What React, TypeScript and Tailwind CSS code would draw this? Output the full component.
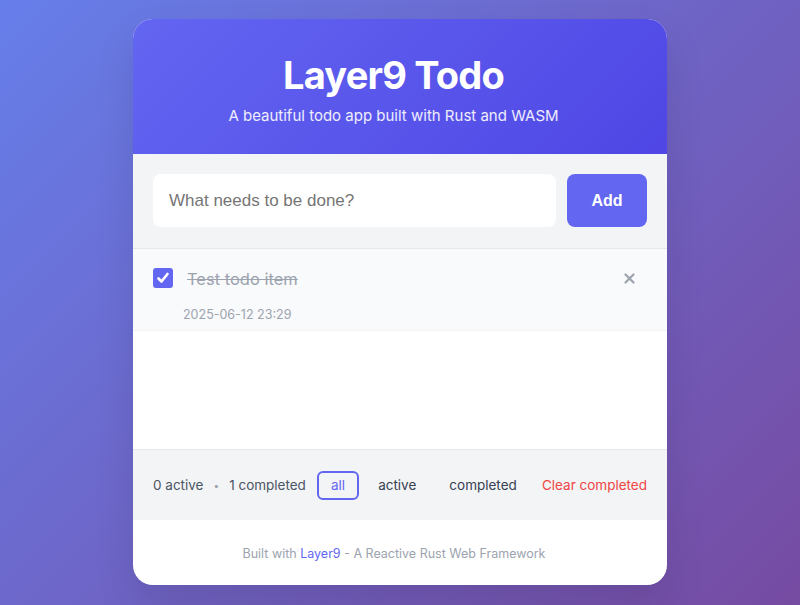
import { useState } from 'react';

type Filter = 'all' | 'active' | 'completed';

export default function App() {
  const [filter, setFilter] = useState<Filter>('all');
  const [done, setDone] = useState(true);

  return (
    <div className="min-h-screen w-full flex items-start justify-center pt-[19px] bg-[linear-gradient(135deg,#667eea_0%,#764ba2_100%)] font-['Inter',sans-serif]">
      <div className="w-[534px] rounded-[20px] overflow-hidden bg-white shadow-[0_20px_40px_rgba(0,0,0,0.1)]">
        {/* header */}
        <div className="h-[135px] flex flex-col items-center pr-[13px] bg-[linear-gradient(135deg,#6366f1_0%,#4f46e5_100%)] text-white">
          <h1 className="mt-[33px] text-[38px] leading-[46px] font-bold tracking-[-0.8px]">Layer9 Todo</h1>
          <p className="mt-[8px] text-[15px] leading-[20px] text-white/90">A beautiful todo app built with Rust and WASM</p>
        </div>

        {/* input */}
        <div className="flex gap-[11px] px-5 pt-5 pb-[21px] bg-[#f3f4f6] border-b border-[#e5e7eb]">
          <input
            className="flex-1 h-[53px] px-4 rounded-lg bg-white text-[17px] font-['Liberation_Sans',Arial,sans-serif] placeholder:text-[#757575] outline-none"
            placeholder="What needs to be done?"
          />
          <button className="w-[80px] h-[53px] rounded-lg bg-[#6366f1] text-white text-[16px] font-bold font-['Liberation_Sans',Arial,sans-serif]">
            Add
          </button>
        </div>

        {/* list */}
        <div className="min-h-[200px]">
          <div className="h-[82px] bg-[#f9fafb] border-b border-[#f3f4f6] px-5 pt-[19px]">
            <div className="flex items-center h-5">
              <button
                onClick={() => setDone(!done)}
                className={`w-5 h-5 rounded-[3px] flex items-center justify-center ${done ? 'bg-[#6366f1]' : 'bg-white border border-gray-400'}`}
              >
                {done && (
                  <svg width="14" height="14" viewBox="0 0 14 14" fill="none">
                    <path d="M2.5 7.5 L5.5 10.5 L11.5 3" stroke="white" strokeWidth="2.6" strokeLinecap="round" strokeLinejoin="round" />
                  </svg>
                )}
              </button>
              <span className={`ml-[14px] mt-[2px] text-[16.5px] ${done ? 'line-through text-[#9ca3af]' : 'text-gray-700'}`}>Test todo item</span>
              <button className="ml-auto mr-[8px] w-5 h-5 flex items-center justify-center text-[#9ca3af]">
                <svg width="11" height="11" viewBox="0 0 11 11">
                  <path d="M1.5 1.5 L9.5 9.5 M9.5 1.5 L1.5 9.5" stroke="currentColor" strokeWidth="2.2" strokeLinecap="round" />
                </svg>
              </button>
            </div>
            <div className="ml-[30px] mt-[19px] text-[12.5px] leading-4 text-[#9ca3af]">2025-06-12 23:29</div>
          </div>
        </div>

        {/* stats */}
        <div className="h-[71px] flex items-center justify-between px-5 bg-[#f3f4f6] border-t border-[#e5e7eb] text-[13.5px] text-[#4b5563]">
          <div className="flex items-center">
            <span>0 active</span>
            <span className="mx-[10px] text-[#9ca3af] text-[10px]">•</span>
            <span>1 completed</span>
          </div>
          <div className="flex gap-[5px]">
            {(['all', 'active', 'completed'] as Filter[]).map((f) => (
              <button
                key={f}
                onClick={() => setFilter(f)}
                className={`h-[29px] px-[12px] rounded-md border-2 ${filter === f ? 'border-[#6366f1] text-[#6366f1]' : 'border-transparent text-[#374151]'}`}
              >
                {f}
              </button>
            ))}
          </div>
          <button className="text-[#ef4444]">Clear completed</button>
        </div>

        {/* footer */}
        <div className="h-[65px] flex items-center justify-center pt-[4px] pr-[12px] text-[12.5px] text-[#9ca3af]">
          <span>
            Built with <span className="text-[#6366f1]">Layer9</span> - A Reactive Rust Web Framework
          </span>
        </div>
      </div>
    </div>
  );
}
